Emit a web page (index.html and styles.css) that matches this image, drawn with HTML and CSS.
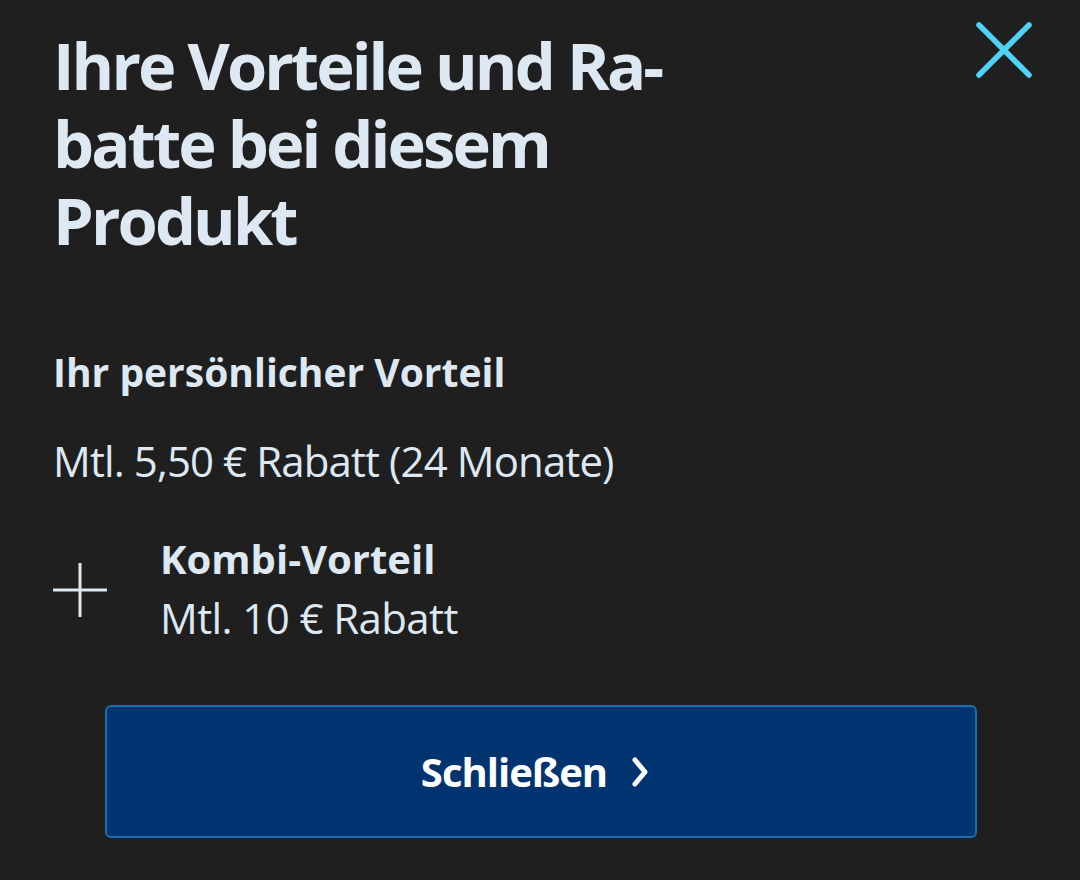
FILE: index.html
```html
<!DOCTYPE html>
<html lang="de">
<head>
    <meta charset="UTF-8">
    <title>Ihre Vorteile</title>
    <link rel="stylesheet" href="styles.css">
</head>
<body>
<div class="sheet">
    <div class="head">
        <h1 class="title">Ihre Vorteile und Ra-<br>batte bei diesem<br>Produkt</h1>
        <button class="close_btn" aria-label="Schließen">
            <svg width="56" height="56" viewBox="0 0 56 56">
                <path d="M3 3L53 53M53 3L3 53" stroke="#4fd2f6" stroke-width="5.5" stroke-linecap="round" fill="none"/>
            </svg>
        </button>
    </div>

    <h2 class="sub">Ihr persönlicher Vorteil</h2>
    <p class="text">Mtl. 5,50 € Rabatt (24 Monate)</p>

    <div class="combi">
        <svg class="plus" width="54" height="54" viewBox="0 0 54 54">
            <path d="M27 1V53M1 27H53" stroke="#dde8f3" stroke-width="3" stroke-linecap="round" fill="none"/>
        </svg>
        <div class="combi_text">
            <div class="combi_title">Kombi-Vorteil</div>
            <div class="text">Mtl. 10 € Rabatt</div>
        </div>
    </div>

    <button class="main_btn">
        <span>Schließen</span>
        <svg width="20" height="30" viewBox="0 0 20 30">
            <path d="M4 3L14 15L4 27" stroke="#fff" stroke-width="5" stroke-linecap="round" stroke-linejoin="round" fill="none"/>
        </svg>
    </button>
</div>
</body>
</html>
```

FILE: styles.css
```css
html, body {
    margin: 0;
    background: #1f1f1f;
}

body {
    width: 1080px;
    height: 880px;
    overflow: hidden;
    font-family: "Open Sans", "Noto Sans", sans-serif;
    color: #dde8f3;
}

.sheet {
    padding: 27px 48px 0 53px;
}

.head {
    display: flex;
    justify-content: space-between;
    align-items: flex-start;
}

.title {
    margin: 0;
    font-size: 65px;
    line-height: 77.5px;
    font-weight: 700;
    letter-spacing: -2.9px;
}

.close_btn {
    margin-top: -5px;
    padding: 0;
    border: none;
    background: none;
    cursor: pointer;
}

.sub {
    margin: 86px 0 0;
    font-size: 39px;
    line-height: 52px;
    font-weight: 700;
}

.text {
    margin: 0;
    font-size: 42px;
    line-height: 60px;
    font-weight: 400;
    letter-spacing: -0.9px;
}

.sub + .text {
    margin-top: 33px;
}

.combi {
    display: flex;
    align-items: center;
    margin-top: 39px;
}

.plus {
    flex: none;
    margin-right: 53px;
    margin-top: 2px;
}

.combi_title {
    font-size: 40px;
    line-height: 58px;
    font-weight: 700;
}

.combi .text {
    letter-spacing: -0.6px;
}

.main_btn {
    display: flex;
    align-items: center;
    justify-content: center;
    gap: 24px;
    width: 872px;
    height: 133px;
    margin: 57px 0 0 52px;
    padding: 0 10px 0 0;
    border: 2px solid #1b6fb0;
    border-radius: 6px;
    background: #003471;
    color: #fff;
    font-family: inherit;
    font-size: 40px;
    font-weight: 700;
    letter-spacing: -1px;
    cursor: pointer;
}

.main_btn svg {
    margin-top: 2px;
}
```
